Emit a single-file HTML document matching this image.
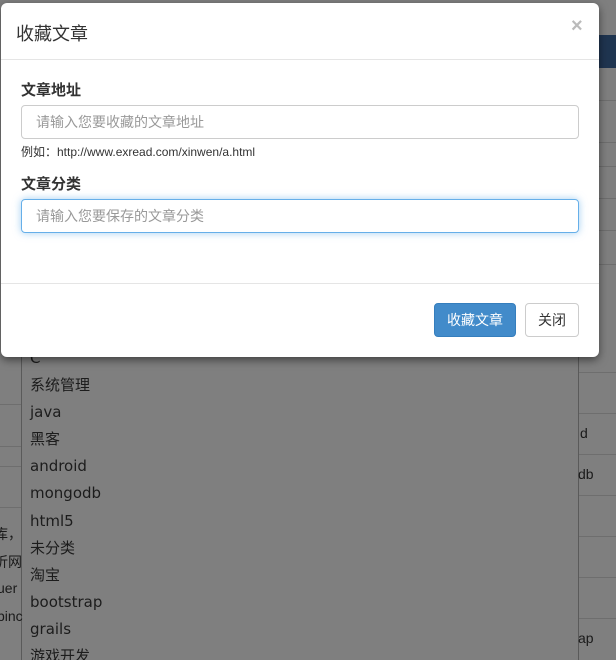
<!DOCTYPE html>
<html><head><meta charset="utf-8"><style>
*{box-sizing:border-box;margin:0;padding:0}
html,body{width:616px;height:660px;overflow:hidden}
body{background:#7f7f7f;position:relative;font-family:"Liberation Sans","Noto Sans CJK SC",sans-serif;color:#1a1a1a}
.abs{position:absolute}
.hl{position:absolute;height:1px;background:#6e6e6e}
.vl{position:absolute;width:1px;background:#5a5a5a}
.item{position:absolute;left:30px;font-size:15px;line-height:20px;height:20px;color:#1c1c1c;font-family:"DejaVu Sans","Noto Sans CJK SC",sans-serif}
.modal{position:absolute;left:1px;top:3px;width:598px;height:354px;background:#fff;border-radius:6px;box-shadow:0 3px 9px rgba(0,0,0,.5)}
.lbl{position:absolute;left:20px;font-weight:bold;font-size:15px;line-height:20px;color:#333}
.inp{position:absolute;left:20px;width:558px;height:34px;border:1px solid #ccc;border-radius:4px;font-size:14px;color:#999;padding:7px 14px;line-height:18px}
.btn{position:absolute;top:300px;height:34px;border-radius:4px;font-size:14px;line-height:32px;text-align:center}
</style></head><body>
<div class="abs" style="left:599px;top:35px;width:17px;height:33px;background:#1f3550"></div>
<div class="hl" style="left:599px;top:100px;width:17px"></div>
<div class="hl" style="left:599px;top:142px;width:17px"></div>
<div class="hl" style="left:599px;top:166px;width:17px"></div>
<div class="hl" style="left:599px;top:198px;width:17px"></div>
<div class="hl" style="left:599px;top:230px;width:17px"></div>
<div class="hl" style="left:599px;top:264px;width:17px"></div>
<div class="hl" style="left:579px;top:372px;width:37px"></div>
<div class="hl" style="left:579px;top:413px;width:37px"></div>
<div class="hl" style="left:579px;top:454px;width:37px"></div>
<div class="hl" style="left:579px;top:495px;width:37px"></div>
<div class="hl" style="left:579px;top:536px;width:37px"></div>
<div class="hl" style="left:579px;top:577px;width:37px"></div>
<div class="hl" style="left:579px;top:618px;width:37px"></div>
<div class="hl" style="left:0;top:404px;width:21px"></div>
<div class="hl" style="left:0;top:446px;width:21px"></div>
<div class="hl" style="left:0;top:466px;width:21px"></div>
<div class="hl" style="left:0;top:507px;width:21px"></div>
<div class="vl" style="left:21px;top:357px;height:303px"></div>
<div class="vl" style="left:578px;top:357px;height:303px"></div>
<div class="abs" style="left:580px;top:425px;font-size:14px">d</div>
<div class="abs" style="left:578px;top:466px;font-size:14px">db</div>
<div class="abs" style="left:578px;top:630px;font-size:14px">ap</div>
<div class="abs" style="left:-6px;top:524px;font-size:14px">库，</div>
<div class="abs" style="left:-6px;top:552px;font-size:14px">折网</div>
<div class="abs" style="left:-3px;top:580px;font-size:14px">uer</div>
<div class="abs" style="left:-3px;top:608px;font-size:14px">binc</div>
<div class="item" style="top:348px">C</div>
<div class="item" style="top:375px">系统管理</div>
<div class="item" style="top:402px">java</div>
<div class="item" style="top:429px">黑客</div>
<div class="item" style="top:456px">android</div>
<div class="item" style="top:483px">mongodb</div>
<div class="item" style="top:511px">html5</div>
<div class="item" style="top:538px">未分类</div>
<div class="item" style="top:565px">淘宝</div>
<div class="item" style="top:592px">bootstrap</div>
<div class="item" style="top:619px">grails</div>
<div class="item" style="top:646px">游戏开发</div>
<div class="modal">
 <div class="abs" style="left:15px;top:17px;font-size:18px;color:#333">收藏文章</div>
 <div class="abs" style="left:570px;top:12px;font-size:20px;font-weight:bold;color:#bbb">×</div>
 <div class="abs" style="left:0;top:56px;width:598px;height:1px;background:#e5e5e5"></div>
 <div class="lbl" style="top:78px">文章地址</div>
 <div class="inp" style="top:102px">请输入您要收藏的文章地址</div>
 <div class="abs" style="left:20px;top:140px;font-size:12px;color:#333">例如：http://www.exread.com/xinwen/a.html</div>
 <div class="lbl" style="top:172px">文章分类</div>
 <div class="inp" style="top:196px;border-color:#66afe9;box-shadow:0 0 8px rgba(102,175,233,.6)">请输入您要保存的文章分类</div>
 <div class="abs" style="left:0;top:280px;width:598px;height:1px;background:#e5e5e5"></div>
 <div class="btn" style="left:433px;width:82px;background:#428bca;border:1px solid #357ebd;color:#fff">收藏文章</div>
 <div class="btn" style="left:524px;width:54px;background:#fff;border:1px solid #ccc;color:#333">关闭</div>
</div>
</body></html>
